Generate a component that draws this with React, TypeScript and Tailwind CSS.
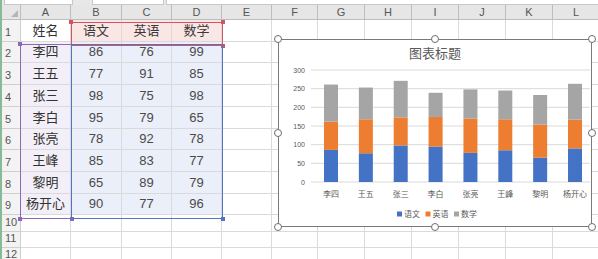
import React from 'react'

const cols = ['A', 'B', 'C', 'D', 'E', 'F', 'G', 'H', 'I', 'J', 'K', 'L']

const rows = [
  { name: '李四', v: [86, 76, 99] },
  { name: '王五', v: [77, 91, 85] },
  { name: '张三', v: [98, 75, 98] },
  { name: '李白', v: [95, 79, 65] },
  { name: '张亮', v: [78, 92, 78] },
  { name: '王峰', v: [85, 83, 77] },
  { name: '黎明', v: [65, 89, 79] },
  { name: '杨开心', v: [90, 77, 96] },
]

const COLORS = ['#4472c4', '#ed7d31', '#a5a5a5']

function Chart() {
  const y0 = 143
  const k = 112 / 300
  return (
    <svg width="314" height="188" className="block">
      <text x="157" y="19" textAnchor="middle" fontSize="13" fill="#595959" fontFamily="Noto Sans CJK SC, sans-serif">
        图表标题
      </text>
      {[0, 50, 100, 150, 200, 250, 300].map((t) => (
        <g key={t}>
          <line x1="33" x2="312" y1={y0 - t * k} y2={y0 - t * k} stroke="#d9d9d9" strokeWidth="1" />
          <text x="27" y={y0 - t * k + 2.5} textAnchor="end" fontSize="7" fill="#595959" fontFamily="Liberation Sans, sans-serif">
            {t}
          </text>
        </g>
      ))}
      {rows.map((r, i) => {
        const cx = 53 + i * 34.86
        let acc = 0
        return (
          <g key={r.name}>
            {r.v.map((v, j) => {
              const top = y0 - (acc + v) * k
              acc += v
              return <rect key={j} x={cx - 7} y={top} width="14" height={v * k} fill={COLORS[j]} />
            })}
            <text x={cx} y="158" textAnchor="middle" fontSize="8" fill="#595959" fontFamily="Noto Sans CJK SC, sans-serif">
              {r.name}
            </text>
          </g>
        )
      })}
      {['语文', '英语', '数学'].map((s, j) => (
        <g key={s}>
          <rect x={119 + j * 28.5} y="172.5" width="5" height="5" fill={COLORS[j]} />
          <text x={126 + j * 28.5} y="178" fontSize="8" fill="#595959" fontFamily="Noto Sans CJK SC, sans-serif">
            {s}
          </text>
        </g>
      ))}
    </svg>
  )
}

// range outline drawn over the cells, with little squares at its corners
function Range({ className, color, corners }: { className: string; color: string; corners: string[] }) {
  return (
    <div className={`absolute border-[1.5px] ${className}`} style={{ borderColor: color }}>
      {corners.map((c) => (
        <div key={c} className={`absolute w-[4px] h-[4px] ${c}`} style={{ background: color }} />
      ))}
    </div>
  )
}

const dot = 'absolute w-[8px] h-[8px] rounded-full bg-white border border-[#6e6e6e]'

export default function App() {
  const cell = 'border-r border-b border-[#dadada] flex items-center justify-center text-[13px]'
  const rowHead = 'border-r border-b border-[#cfcfcf] bg-[#f3f3f3] text-[11px] text-[#555] flex items-end pl-[3px] pb-[1px]'

  return (
    <div
      className="relative w-[598px] h-[259px] overflow-hidden bg-white flex"
      style={{ fontFamily: '"Liberation Sans", "Noto Sans CJK SC", sans-serif' }}
    >
      <div className="w-[2px] shrink-0 bg-[#86bb95]" />
      <div className="flex-1 flex flex-col">
        {/* formula bar remnant */}
        <div className="h-[8px] bg-[#e8e8e8] flex items-start">
          <div className="ml-[2px] w-[69px] h-[5px] bg-white border-x border-b border-[#c8c8c8]" />
          <div className="ml-[19px] w-[72px] h-[5px] bg-white border-x border-b border-[#c8c8c8]" />
          <div className="ml-[2px] flex-1 h-[5px] bg-white border-l border-b border-[#c8c8c8]" />
        </div>

        <div className="grid grid-cols-[19px_50px_51px_50px_50px_50px_46px_47px_47px_47px_47px_47px_47px] grid-rows-[15px_22px_21px_22px_22px_22px_21px_22px_22px_21px_17px_16px_16px]">
          <div className="border-r border-b border-[#bdbdbd] bg-[#e6e6e6] flex items-end justify-end p-[2px]">
            <div className="w-0 h-0 border-l-[7px] border-l-transparent border-b-[7px] border-b-[#b5b5b5]" />
          </div>
          {cols.map((c) => (
            <div
              key={c}
              className="border-r border-b border-[#bdbdbd] bg-[#e6e6e6] flex items-center justify-center text-[11px] text-[#555]"
            >
              {c}
            </div>
          ))}

          <div className={rowHead}>1</div>
          <div className={`${cell} text-[#333]`}>姓名</div>
          {['语文', '英语', '数学'].map((s) => (
            <div key={s} className={`${cell} bg-[#fbe6e6] text-[#3a3a3a]`}>
              {s}
            </div>
          ))}
          {Array.from({ length: 8 }).map((_, i) => (
            <div key={i} className={cell} />
          ))}

          {rows.map((r, ri) => (
            <React.Fragment key={r.name}>
              <div className={rowHead}>{ri + 2}</div>
              <div className={`${cell} bg-[#f3eff8] text-[#333]`}>{r.name}</div>
              {r.v.map((v, j) => (
                <div key={j} className={`${cell} bg-[#eaeff9] text-[#4a4a4a]`}>
                  {v}
                </div>
              ))}
              {Array.from({ length: 8 }).map((_, i) => (
                <div key={i} className={cell} />
              ))}
            </React.Fragment>
          ))}

          {[10, 11, 12].map((n) => (
            <React.Fragment key={n}>
              <div className={`${rowHead} pl-[2px]`}>{n}</div>
              {Array.from({ length: 12 }).map((_, i) => (
                <div key={i} className={cell} />
              ))}
            </React.Fragment>
          ))}
        </div>
      </div>

      {/* chart data ranges */}
      <Range
        className="left-[71px] top-[22px] w-[152px] h-[24px]"
        color="#d2555f"
        corners={['-left-[3px] -top-[3px]', '-right-[3px] -top-[3px]', '-right-[3px] -bottom-[3px]']}
      />
      <Range
        className="left-[20px] top-[44px] w-[52px] h-[175px]"
        color="#8e68b8"
        corners={['-left-[3px] -top-[3px]', '-left-[3px] -bottom-[3px]', '-right-[3px] -bottom-[3px]']}
      />
      <Range
        className="left-[71px] top-[44px] w-[152px] h-[175px]"
        color="#4f74c8"
        corners={['-right-[3px] -bottom-[3px]']}
      />

      {/* chart object with its sizing handles */}
      <div className="absolute left-[278px] top-[39px] w-[314px] h-[188px] bg-white border border-[#7a7a7a]">
        <div className="-m-px">
          <Chart />
        </div>
        <div className={`${dot} -left-[5px] -top-[5px]`} />
        <div className={`${dot} left-[152px] -top-[5px]`} />
        <div className={`${dot} -right-[5px] -top-[5px]`} />
        <div className={`${dot} -left-[5px] top-[89px]`} />
        <div className={`${dot} -right-[5px] top-[89px]`} />
        <div className={`${dot} -left-[5px] -bottom-[5px]`} />
        <div className={`${dot} left-[152px] -bottom-[5px]`} />
        <div className={`${dot} -right-[5px] -bottom-[5px]`} />
      </div>
    </div>
  )
}
